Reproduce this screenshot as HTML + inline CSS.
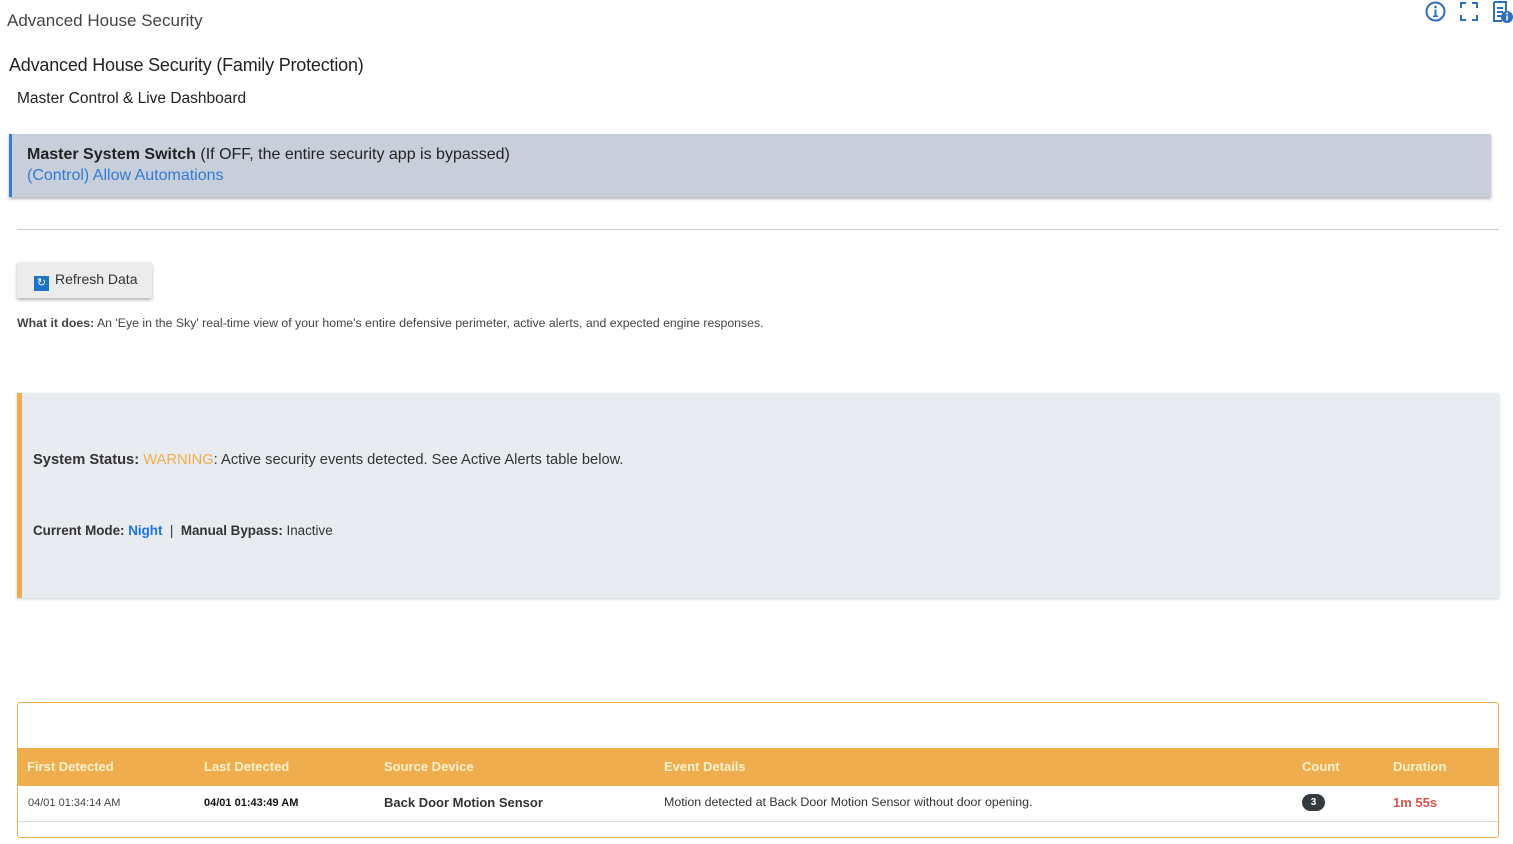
<!DOCTYPE html>
<html><head><meta charset="utf-8"><style>
*{box-sizing:border-box}
body{margin:0;width:1513px;height:844px;overflow:hidden;background:#fff;font-family:"Liberation Sans",Arial,sans-serif;color:#222;position:relative}
.abs{position:absolute}
</style></head><body>
<div class="abs" style="left:7px;top:11px;font-size:17px;color:#444">Advanced House Security</div>
<svg class="abs" style="left:1424px;top:0" width="89" height="24" viewBox="0 0 89 24">
<circle cx="11.5" cy="11.5" r="9" fill="none" stroke="#2f6fbf" stroke-width="2"/>
<circle cx="11.5" cy="7" r="1.3" fill="#2f6fbf"/><rect x="10.5" y="9.5" width="2" height="7" fill="#2f6fbf"/><rect x="9" y="15.5" width="5" height="1.5" fill="#2f6fbf"/>
<path d="M37 8V3h5M48 3h5v5M53 15v5h-5M42 20h-5v-5" fill="none" stroke="#2f6fbf" stroke-width="2"/>
<path d="M70 2h12v10M70 2v19h8" fill="none" stroke="#2f6fbf" stroke-width="2"/>
<path d="M73 8h6M73 12h6M73 16h4" stroke="#2f6fbf" stroke-width="2"/>
<circle cx="83" cy="17" r="6" fill="#2f6fbf"/><rect x="82.2" y="15.5" width="1.6" height="5" fill="#fff"/><circle cx="83" cy="13.5" r="1" fill="#fff"/>
</svg>
<div class="abs" style="left:9px;top:55px;font-size:18px;color:#222;letter-spacing:-0.2px">Advanced House Security (Family Protection)</div>
<div class="abs" style="left:17px;top:90px;font-size:15.5px;color:#222">Master Control &amp; Live Dashboard</div>
<div class="abs" style="left:9px;top:134px;width:1482px;height:63px;background:#c8cfdb;border-left:3px solid #3a7bd5;box-shadow:0 2px 3px rgba(0,0,0,.3);padding:12px 0 0 15px;font-size:16px">
<div><b>Master System Switch</b> (If OFF, the entire security app is bypassed)</div>
<div style="color:#2f7bd6;margin-top:3px">(Control) Allow Automations</div></div>
<div class="abs" style="left:17px;top:229px;width:1482px;height:1px;background:#ccc"></div>
<div class="abs" style="left:17px;top:262px;width:135px;height:36px;background:#ececec;box-shadow:0 2px 3px rgba(0,0,0,.3);border-radius:2px;font-size:14px;color:#333;padding:9px 0 0 17px">
<span style="display:inline-block;width:15px;height:15px;background:#1e73c8;vertical-align:-2px;margin-right:6px;color:#fff;font-size:11px;text-align:center;line-height:15px">↻</span>Refresh Data</div>
<div class="abs" style="left:17px;top:316px;font-size:12.3px;color:#444"><b>What it does:</b> An 'Eye in the Sky' real-time view of your home's entire defensive perimeter, active alerts, and expected engine responses.</div>
<div class="abs" style="left:17px;top:393px;width:1482px;height:205px;background:#e8ebef;border-left:5px solid #f0ad4e;box-shadow:0 1px 3px rgba(0,0,0,.2)"></div>
<div class="abs" style="left:33px;top:452px;font-size:14.7px;color:#333"><b>System Status:</b> <span style="color:#f0ad4e">WARNING</span>: Active security events detected. See Active Alerts table below.</div>
<div class="abs" style="left:33px;top:523px;font-size:13.4px;color:#333"><b>Current Mode:</b> <b style="color:#1a73e8">Night</b> &nbsp;| &nbsp;<b>Manual Bypass:</b> Inactive</div>
<div class="abs" style="left:17px;top:702px;width:1482px;height:136px;border:1px solid #f0ad4e;border-radius:3px;overflow:hidden">
<div style="position:absolute;left:0;top:45px;width:100%;height:38px;background:#f0ad4e"></div>
<div style="position:absolute;left:0;top:118px;width:100%;height:1px;background:#ddd"></div>
</div>
<div class="abs" style="top:759px;left:0;font-size:13px;font-weight:bold;color:#fdf2d0;width:1513px">
<span class="abs" style="left:27px">First Detected</span><span class="abs" style="left:204px">Last Detected</span><span class="abs" style="left:384px">Source Device</span><span class="abs" style="left:664px">Event Details</span><span class="abs" style="left:1302px">Count</span><span class="abs" style="left:1393px">Duration</span></div>
<div class="abs" style="left:28px;top:797px;font-size:11px;color:#444">04/01 01:34:14 AM</div>
<div class="abs" style="left:204px;top:797px;font-size:11px;font-weight:bold;color:#111">04/01 01:43:49 AM</div>
<div class="abs" style="left:384px;top:795px;font-size:13px;font-weight:bold;color:#333">Back Door Motion Sensor</div>
<div class="abs" style="left:664px;top:795px;font-size:12.4px;color:#333">Motion detected at Back Door Motion Sensor without door opening.</div>
<div class="abs" style="left:1302px;top:794px;width:23px;height:17px;border-radius:9px;background:#343a40;color:#fff;font-size:10px;font-weight:bold;text-align:center;line-height:17px">3</div>
<div class="abs" style="left:1393px;top:795px;font-size:13px;font-weight:bold;color:#d9534f">1m 55s</div>
</body></html>
